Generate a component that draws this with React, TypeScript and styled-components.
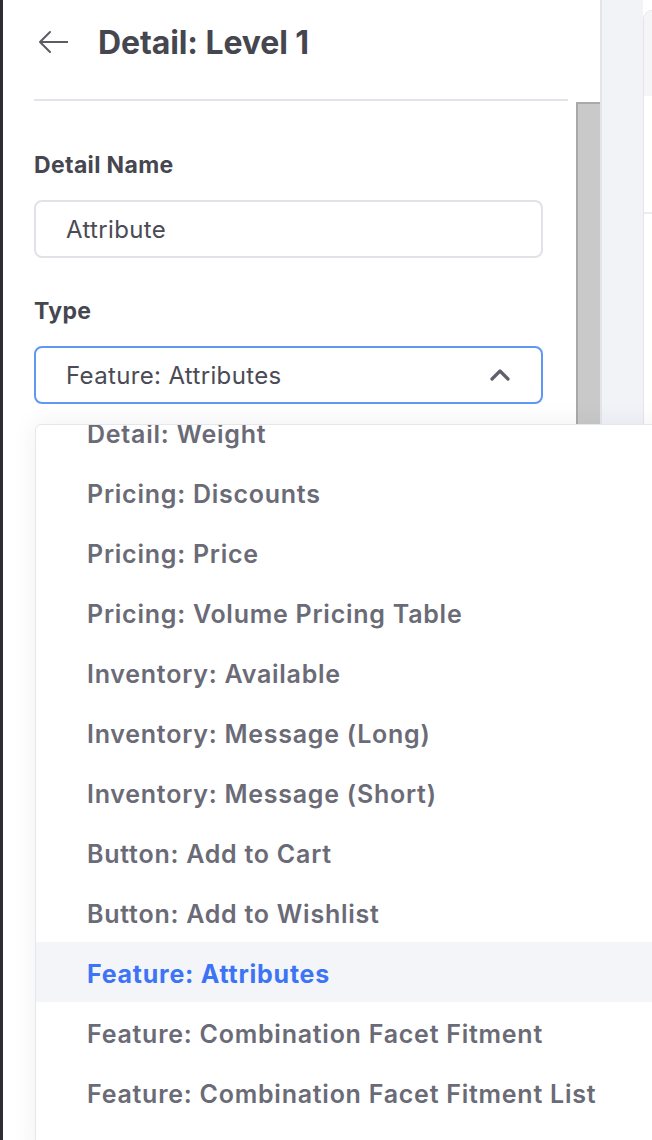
import React from "react";
import styled, { createGlobalStyle } from "styled-components";

const GlobalStyle = createGlobalStyle`
  html, body {
    margin: 0;
    padding: 0;
    background: #ffffff;
  }
  body {
    font-family: Inter, "Noto Sans", "Liberation Sans", sans-serif;
    -webkit-font-smoothing: antialiased;
  }
`;

const Root = styled.div`
  position: relative;
  width: 652px;
  height: 1140px;
  display: flex;
  overflow: hidden;
  border-left: 3px solid #2e2e32;
  box-sizing: border-box;
`;

const Panel = styled.div`
  width: 597px;
  flex-shrink: 0;
  display: flex;
  background: #ffffff;
`;

const Content = styled.div`
  flex: 1;
  padding: 0 8px 0 31px;
  display: flex;
  flex-direction: column;
`;

const Header = styled.div`
  height: 84px;
  display: flex;
  align-items: center;
  gap: 30px;
  padding-left: 4px;
`;

const BackButton = styled.button`
  border: none;
  background: none;
  padding: 0;
  width: 30px;
  height: 24px;
  display: flex;
  align-items: center;
  color: #5b5c66;
  cursor: pointer;
`;

const Title = styled.h1`
  margin: 0;
  font-size: 32px;
  font-weight: 700;
  letter-spacing: -0.1px;
  color: #45464f;
`;

const Divider = styled.hr`
  margin: 15px 0 0;
  border: none;
  height: 2px;
  background: #e3e4ea;
`;

const Form = styled.div`
  display: flex;
  flex-direction: column;
  padding-top: 50px;
  padding-right: 25px;
`;

const Label = styled.label`
  font-size: 23px;
  line-height: 28px;
  font-weight: 700;
  letter-spacing: 0.35px;
  color: #45464f;
  margin-bottom: 21px;
`;

const Field = styled.div<{ $focused?: boolean }>`
  height: 58px;
  box-sizing: border-box;
  border: 2px solid ${(p) => (p.$focused ? "#5e97f6" : "#e1e2e8")};
  border-radius: 8px;
  display: flex;
  align-items: center;
  justify-content: space-between;
  padding: 0 30px 0 30px;
  font-size: 24px;
  letter-spacing: 0.35px;
  color: #4a4b55;
  margin-bottom: ${(p) => (p.$focused ? "0" : "39px")};
`;

const Scrollbar = styled.div`
  width: 24px;
  display: flex;
  flex-direction: column;
  padding-top: 102px;
`;

const Thumb = styled.div`
  flex: 1;
  background: #c9c9c9;
  border-left: 2px solid #a9a9a9;
  border-top: 2px solid #a9a9a9;
`;

const SideStrip = styled.div`
  width: 41px;
  flex-shrink: 0;
  background: #f2f3f7;
  border-left: 2px solid #e4e5ec;
`;

const Card = styled.div`
  flex: 1;
  margin-top: 10px;
  border: 1px solid #e4e4ea;
  border-right: none;
  border-radius: 10px 0 0 0;
  background: #ffffff;
  display: flex;
  flex-direction: column;
`;

const CardHead = styled.div`
  height: 85px;
  background: #f5f5f7;
  border-radius: 10px 0 0 0;
`;

const CardRow = styled.div`
  height: 116px;
  border-bottom: 2px solid #ececf0;
`;

// Open listbox of the Type select, scrolled a little past its first rows
const Menu = styled.div`
  position: absolute;
  top: 424px;
  left: 32px;
  width: 700px;
  bottom: -20px;
  background: #ffffff;
  border: 1px solid #e6e7ec;
  border-radius: 6px 0 0 0;
  box-shadow: 0 0 26px rgba(40, 44, 80, 0.07);
  overflow: hidden;
`;

const MenuList = styled.ul`
  list-style: none;
  margin: -23px 0 0;
  padding: 0;
`;

const MenuItem = styled.li<{ $active?: boolean }>`
  height: 60px;
  box-sizing: border-box;
  padding: 3px 0 0 51px;
  display: flex;
  align-items: center;
  font-size: 25px;
  font-weight: ${(p) => (p.$active ? 700 : 600)};
  letter-spacing: 0.75px;
  color: ${(p) => (p.$active ? "#3d74f5" : "#6a6b76")};
  background: ${(p) => (p.$active ? "#f4f5f9" : "transparent")};
`;

const types = [
  "Detail: Weight",
  "Pricing: Discounts",
  "Pricing: Price",
  "Pricing: Volume Pricing Table",
  "Inventory: Available",
  "Inventory: Message (Long)",
  "Inventory: Message (Short)",
  "Button: Add to Cart",
  "Button: Add to Wishlist",
  "Feature: Attributes",
  "Feature: Combination Facet Fitment",
  "Feature: Combination Facet Fitment List",
];

const selected = "Feature: Attributes";

const App: React.FC = () => {
  return (
    <>
      <GlobalStyle />
      <Root>
        <Panel>
          <Content>
            <Header>
              <BackButton aria-label="Back">
                <svg width="30" height="24" viewBox="0 0 30 24" fill="none">
                  <path
                    d="M2 12H30M12 2L2 12L12 22"
                    stroke="currentColor"
                    strokeWidth="2"
                    strokeLinecap="round"
                    strokeLinejoin="round"
                  />
                </svg>
              </BackButton>
              <Title>Detail: Level 1</Title>
            </Header>
            <Divider />
            <Form>
              <Label>Detail Name</Label>
              <Field>Attribute</Field>
              <Label>Type</Label>
              <Field $focused>
                {selected}
                <svg width="22" height="14" viewBox="0 0 22 14" fill="none">
                  <path
                    d="M3 11L11 3L19 11"
                    stroke="#5f606b"
                    strokeWidth="3.2"
                    strokeLinecap="round"
                    strokeLinejoin="round"
                  />
                </svg>
              </Field>
            </Form>
          </Content>
          <Scrollbar>
            <Thumb />
          </Scrollbar>
        </Panel>
        <SideStrip />
        <Card>
          <CardHead />
          <CardRow />
        </Card>
        <Menu>
          <MenuList>
            {types.map((t) => (
              <MenuItem key={t} $active={t === selected}>
                {t}
              </MenuItem>
            ))}
          </MenuList>
        </Menu>
      </Root>
    </>
  );
};

export default App;
